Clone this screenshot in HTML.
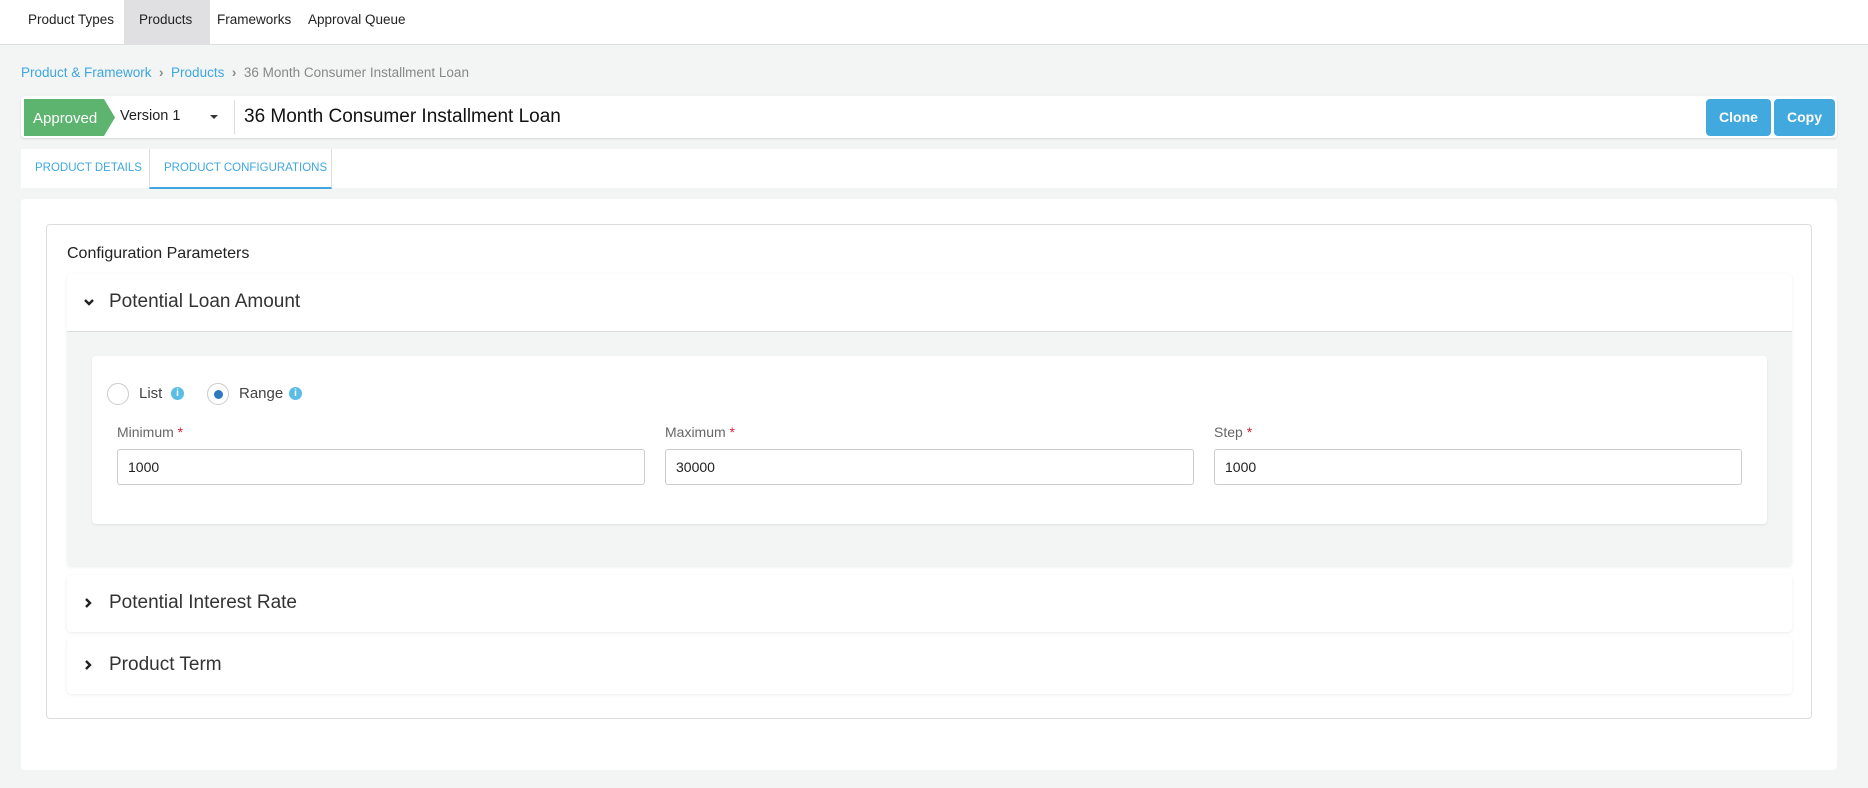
<!DOCTYPE html>
<html><head><style>
*{box-sizing:border-box;margin:0;padding:0}
body{width:1868px;height:788px;background:#f3f4f4;font-family:"Liberation Sans",sans-serif;position:relative;overflow:hidden;color:#333}
.abs{position:absolute}
.nav{left:0;top:0;width:1868px;height:45px;background:#fff;border-bottom:1px solid #ddd}
.nav span{position:absolute;top:12px;font-size:13.5px;color:#222}
.bc{top:65px;left:21px;font-size:13.5px;color:#3ea7e0}
.hdr{left:21px;top:96px;width:1816px;height:42px;background:#fff;border-radius:4px;box-shadow:0 1px 2px rgba(0,0,0,.12)}
.btn{top:99px;height:37px;background:#42a9df;color:#fff;border-radius:4px;font-size:14px;font-weight:bold;text-align:center;line-height:37px}
.acc{background:#fff;border-radius:4px;box-shadow:0 1px 3px rgba(0,0,0,.08)}
.acc .t{position:absolute;left:42px;font-size:19px;color:#333}
.lbl{font-size:14px;color:#666;top:424px}
.lbl b{color:#e02030;font-weight:normal}
.inp{top:449px;height:36px;border:1px solid #ccc;border-radius:3px;background:#fff;font-size:14px;line-height:34px;padding-left:10px;color:#222}
.info{width:13px;height:13px;border-radius:50%;background:#5bbde6;color:#fff;font-size:10px;font-weight:bold;text-align:center;line-height:13px;top:387px}
</style></head><body>
<div class="abs nav">
<div class="abs" style="left:124px;top:0;width:86px;height:45px;background:#e0e0e2"></div>
<span style="left:28px">Product Types</span>
<span style="left:139px">Products</span>
<span style="left:217px">Frameworks</span>
<span style="left:308px">Approval Queue</span>
</div>
<div class="abs bc">Product &amp; Framework <span style="color:#888;font-weight:bold">&nbsp;›&nbsp;</span> Products <span style="color:#888"><b>&nbsp;›&nbsp;</b> 36 Month Consumer Installment Loan</span></div>
<div class="abs hdr"></div>
<svg class="abs" style="left:24px;top:99px" width="92" height="37"><polygon points="0,0 80,0 91,18.5 80,37 0,37" fill="#5cb46f"/><text x="9" y="24" fill="#fff" font-size="15" font-family="Liberation Sans">Approved</text></svg>
<div class="abs" style="left:120px;top:108px;font-size:14.5px;color:#222">Version 1</div>
<div class="abs" style="left:210px;top:115px;width:0;height:0;border-left:4px solid transparent;border-right:4px solid transparent;border-top:4px solid #333"></div>
<div class="abs" style="left:234px;top:100px;width:1px;height:34px;background:#ddd"></div>
<div class="abs" style="left:244px;top:106px;font-size:19px;color:#111">36 Month Consumer Installment Loan</div>
<div class="abs btn" style="left:1706px;width:65px">Clone</div>
<div class="abs btn" style="left:1774px;width:61px">Copy</div>
<div class="abs" style="left:21px;top:149px;width:1816px;height:39px;background:#fff"></div>
<div class="abs" style="left:35px;top:162px;font-size:11.5px;color:#3ea7e0">PRODUCT DETAILS</div>
<div class="abs" style="left:149px;top:149px;width:183px;height:40px;border-left:1px solid #ddd;border-right:1px solid #ddd;border-bottom:2px solid #3ea7e0"></div>
<div class="abs" style="left:164px;top:162px;font-size:11.5px;color:#3ea7e0">PRODUCT CONFIGURATIONS</div>
<div class="abs" style="left:21px;top:199px;width:1816px;height:571px;background:#fff;border-radius:4px"></div>
<div class="abs" style="left:46px;top:224px;width:1766px;height:495px;border:1px solid #ddd;border-radius:4px"></div>
<div class="abs" style="left:67px;top:245px;font-size:16px;color:#222">Configuration Parameters</div>
<div class="abs acc" style="left:67px;top:274px;width:1725px;height:292px;overflow:hidden">
<div class="abs" style="left:0;top:57px;width:1725px;height:235px;background:#f3f4f4;border-top:1px solid #ddd"></div>
<svg class="abs" style="left:16px;top:24px" width="12" height="9"><path d="M2 2 L6 6 L10 2" stroke="#222" stroke-width="2.4" fill="none"/></svg>
<div class="t" style="top:17px">Potential Loan Amount</div>
</div>
<div class="abs" style="left:92px;top:356px;width:1675px;height:168px;background:#fff;border-radius:4px;box-shadow:0 1px 2px rgba(0,0,0,.08)"></div>
<div class="abs" style="left:107px;top:383px;width:22px;height:22px;border:1px solid #ccc;border-radius:50%"></div>
<div class="abs" style="left:139px;top:385px;font-size:15px;color:#444">List</div>
<div class="abs info" style="left:171px">i</div>
<div class="abs" style="left:207px;top:383px;width:22px;height:22px;border:1px solid #ccc;border-radius:50%"><div style="margin:6px;width:9px;height:9px;border-radius:50%;background:#2f78c0"></div></div>
<div class="abs" style="left:239px;top:385px;font-size:15px;color:#444">Range</div>
<div class="abs info" style="left:289px">i</div>
<div class="abs lbl" style="left:117px">Minimum<b> *</b></div>
<div class="abs lbl" style="left:665px">Maximum<b> *</b></div>
<div class="abs lbl" style="left:1214px">Step<b> *</b></div>
<div class="abs inp" style="left:117px;width:528px">1000</div>
<div class="abs inp" style="left:665px;width:529px">30000</div>
<div class="abs inp" style="left:1214px;width:528px">1000</div>
<div class="abs acc" style="left:67px;top:575px;width:1725px;height:57px">
<svg class="abs" style="left:17px;top:22px" width="9" height="12"><path d="M2 2 L6 6 L2 10" stroke="#222" stroke-width="2.4" fill="none"/></svg>
<div class="t" style="top:17px">Potential Interest Rate</div></div>
<div class="abs acc" style="left:67px;top:637px;width:1725px;height:57px">
<svg class="abs" style="left:17px;top:22px" width="9" height="12"><path d="M2 2 L6 6 L2 10" stroke="#222" stroke-width="2.4" fill="none"/></svg>
<div class="t" style="top:17px">Product Term</div></div>
</body></html>
